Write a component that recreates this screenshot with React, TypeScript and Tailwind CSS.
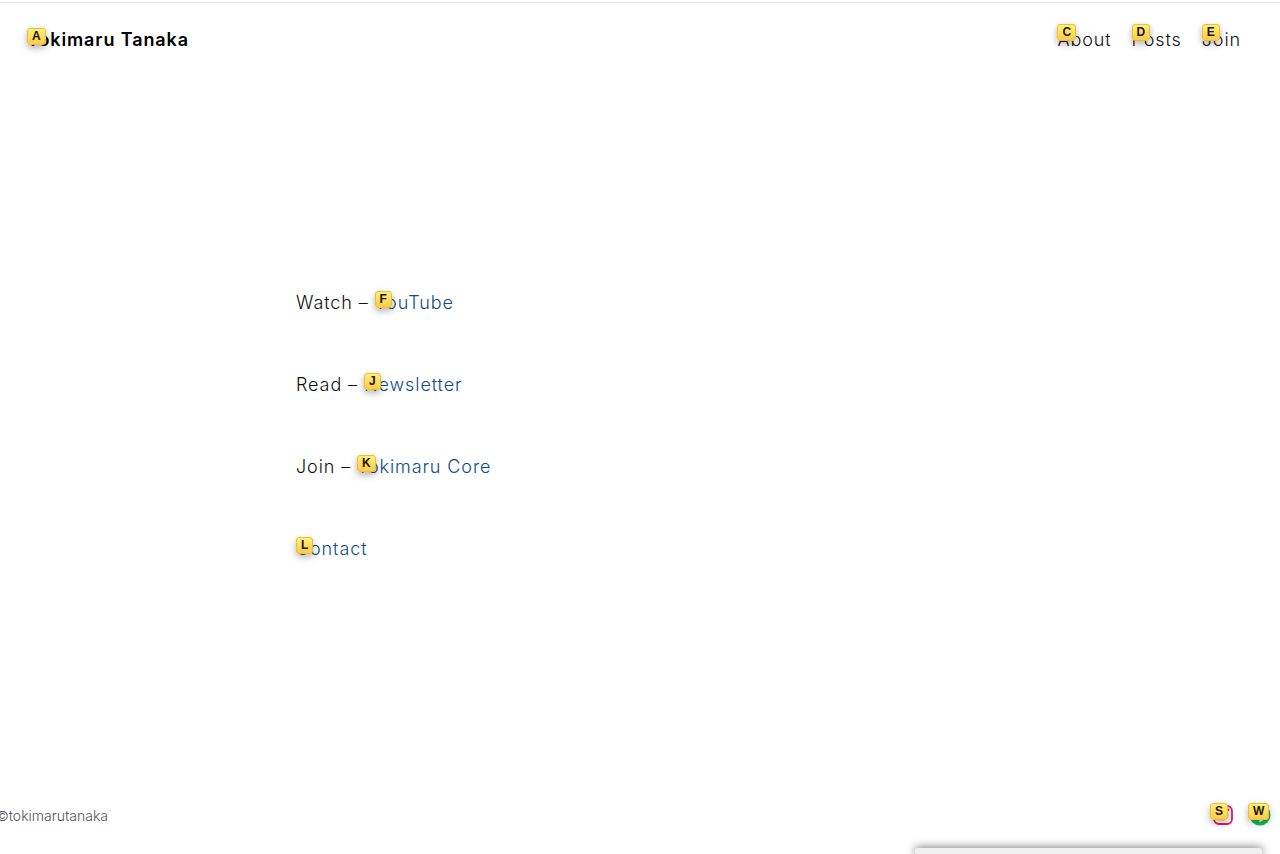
import type { ReactNode } from 'react';

const navLinks = [
  { label: 'About', hint: 'C' },
  { label: 'Posts', hint: 'D' },
  { label: 'Join', hint: 'E' },
];

const mainLinks = [
  { prefix: 'Watch – ', label: 'YouTube', hint: 'F' },
  { prefix: 'Read – ', label: 'Newsletter', hint: 'J' },
  { prefix: 'Join – ', label: 'Tokimaru Core', hint: 'K' },
  { prefix: '', label: 'Contact', hint: 'L' },
];

function Hint({ children }: { children: ReactNode }) {
  return (
    <span className="block rounded-[3px] border border-[#e9c030] bg-linear-to-b from-[#fff07a] to-[#ffc94a] px-1 font-['Liberation_Sans',sans-serif] text-[12px] font-bold leading-[15px] tracking-normal text-[#1c1603] shadow-[0_3px_7px_rgba(0,0,0,0.3)]">
      {children}
    </span>
  );
}

function InstagramIcon() {
  return (
    <svg viewBox="0 0 20 20" className="h-5 w-5" fill="none" aria-hidden="true">
      <rect x="1" y="1" width="18" height="18" rx="5" stroke="#ec1567" strokeWidth="1.8" />
      <circle cx="10" cy="10" r="4.4" stroke="#ec1567" strokeWidth="1.8" />
      <circle cx="15.2" cy="4.8" r="1.2" fill="#ec1567" />
    </svg>
  );
}

function LineIcon() {
  return (
    <svg viewBox="0 0 22 22" className="h-[22px] w-[22px]" aria-hidden="true">
      <circle cx="11" cy="11" r="10.5" fill="#0fc456" />
      <path
        d="M11 4.5c-4.1 0-7.3 2.6-7.3 5.8 0 2.9 2.6 5.3 6.2 5.7.8.2.5.9.4 1.9 0 .4.3.5.7.2 2.3-1.3 7.3-4.2 7.3-7.8 0-3.2-3.2-5.8-7.3-5.8z"
        fill="#fff"
      />
    </svg>
  );
}

export default function App() {
  return (
    <div className="relative flex min-h-screen flex-col overflow-hidden bg-white pt-[2px] font-['Inter',sans-serif] text-[18px] font-light tracking-wider text-[#111]">
      <header className="flex items-center justify-between border-t border-[#e2e2e2] pb-6 pl-[27px] pr-[39px] pt-[21px]">
        <a href="#home" className="relative font-semibold leading-8 text-black">
          Tokimaru Tanaka
          <span className="absolute left-0 top-1"><Hint>A</Hint></span>
        </a>
        <nav className="flex gap-5">
          {navLinks.map((link) => (
            <a key={link.label} href={`#${link.label.toLowerCase()}`} className="relative leading-8">
              {link.label}
              <span className="absolute left-0 top-0"><Hint>{link.hint}</Hint></span>
            </a>
          ))}
        </nav>
      </header>

      <main className="flex flex-1 flex-col justify-center px-6 pb-8">
        <div className="mx-auto flex w-full max-w-[688px] flex-col gap-[50px]">
          {mainLinks.map((item) => (
            <p key={item.label} className="leading-8">
              {item.prefix}
              <a href={`#${item.label.toLowerCase().replace(' ', '-')}`} className="relative inline-block text-[#0f4c8a]">
                {item.label}
                <span className="absolute left-0 top-1"><Hint>{item.hint}</Hint></span>
              </a>
            </p>
          ))}
        </div>
      </main>

      <footer className="flex items-center justify-between pb-7 pr-[9px] tracking-normal">
        <small className="-ml-1 pt-[2px] text-[14px] leading-5 text-[#555]">©tokimarutanaka</small>
        <div className="flex items-center gap-4">
          <a href="#instagram" aria-label="Instagram" className="relative">
            <InstagramIcon />
            <span className="absolute -left-[3px] -top-[2px]"><Hint>S</Hint></span>
          </a>
          <a href="#line" aria-label="LINE" className="relative">
            <LineIcon />
            <span className="absolute -left-[1px] -top-[1px]"><Hint>W</Hint></span>
          </a>
        </div>
      </footer>

      <div className="absolute bottom-0 right-[18px] h-[6px] w-[347px] rounded-t-[3px] bg-[#f0f0f0] shadow-[0_0_10px_rgba(0,0,0,0.7)]" />
    </div>
  );
}
